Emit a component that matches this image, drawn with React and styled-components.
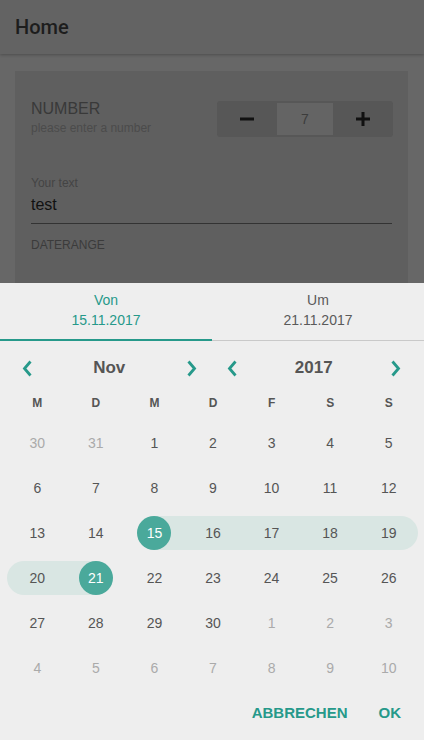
import React, { useState } from 'react';
import styled, { createGlobalStyle } from 'styled-components';

const TEAL = '#26998a';
const TEAL_LIGHT = '#4aa99b';
const BAND = '#d9e6e3';

const GlobalStyle = createGlobalStyle`
  html, body { margin: 0; padding: 0; }
  body {
    background: #676767;
    font-family: "Liberation Sans", Arial, sans-serif;
    height: 740px;
    overflow: hidden;
  }
`;

const Page = styled.div`
  min-height: 740px;
`;

const AppBar = styled.header`
  height: 54px;
  background: #636363;
  box-shadow: 0 1px 3px rgba(0, 0, 0, 0.25);
  display: flex;
  align-items: center;
  padding: 0 15px;
`;

const Title = styled.h1`
  margin: 0;
  font-family: Roboto, "Liberation Sans", sans-serif;
  font-weight: 500;
  font-size: 20px;
  color: #1d1d1d;
`;

const Card = styled.section`
  margin: 17px 16px 0 15px;
  background: #5f5f5f;
  padding: 30px 16px 0;
  min-height: 400px;
`;

const NumberRow = styled.div`
  display: flex;
  justify-content: space-between;
  align-items: flex-start;
`;

const LabelBlock = styled.div`
  display: flex;
  flex-direction: column;
  margin-top: -1px;
`;

const BigLabel = styled.span`
  font-size: 16px;
  line-height: 18px;
  color: #393939;
`;

const Hint = styled.span`
  font-size: 12px;
  line-height: 15px;
  margin-top: 3px;
  color: #4b4b4b;
`;

const Stepper = styled.div`
  display: flex;
  width: 176px;
  height: 36px;
  background: #575757;
  border-radius: 3px;
  margin-right: -1px;
`;

const StepButton = styled.div`
  width: 60px;
  display: flex;
  align-items: center;
  justify-content: center;
`;

const StepValue = styled.div`
  width: 56px;
  margin: 2px 0;
  background: #646464;
  display: flex;
  align-items: center;
  justify-content: center;
  font-size: 14px;
  color: #3c3c3c;
`;

const Field = styled.div`
  margin-top: 39px;
  border-bottom: 1px solid #333;
  padding-bottom: 8px;
`;

const SmallLabel = styled.div`
  font-size: 12px;
  line-height: 14px;
  color: #444;
`;

const FieldValue = styled.div`
  font-size: 16px;
  line-height: 20px;
  margin-top: 5px;
  color: #111;
`;

const Section = styled.div`
  margin-top: 14px;
  font-size: 12px;
  line-height: 14px;
  color: #3b3b3b;
`;

const Sheet = styled.div`
  position: fixed;
  left: 0;
  right: 0;
  bottom: 0;
  height: 457px;
  background: #eeeeee;
  display: flex;
  flex-direction: column;
`;

const Tabs = styled.div`
  display: flex;
  height: 58px;
`;

const Tab = styled.div`
  flex: 1;
  box-sizing: border-box;
  height: 58px;
  padding-top: 7px;
  display: flex;
  flex-direction: column;
  align-items: center;
  font-size: 14px;
  line-height: 20px;
  color: ${p => (p.$active ? TEAL : '#5a5a5a')};
  border-bottom: ${p => (p.$active ? `2px solid ${TEAL}` : '1px solid #c9c9c9')};
`;

const NavRow = styled.div`
  display: flex;
  gap: 12px;
  padding: 0 14px 0 13px;
  margin-top: 7px;
  height: 40px;
`;

const Selector = styled.div`
  flex: 1;
  display: flex;
  align-items: center;
`;

const Arrow = styled.div`
  width: 28px;
  height: 40px;
  display: flex;
  align-items: center;
  justify-content: center;
`;

const SelectorLabel = styled.div`
  flex: 1;
  text-align: center;
  font-size: 17px;
  font-weight: bold;
  color: #555;
`;

const Grid = styled.div`
  display: grid;
  grid-template-columns: repeat(7, 1fr);
  padding: 0 6px 0 8px;
`;

const WeekDay = styled.div`
  height: 30px;
  display: flex;
  align-items: center;
  justify-content: center;
  font-size: 12px;
  font-weight: bold;
  color: #555;
`;

const Days = styled(Grid)`
  margin-top: 2px;
`;

const DayCell = styled.div`
  position: relative;
  height: 45px;
  display: flex;
  align-items: center;
  justify-content: center;

  &::before {
    content: '';
    display: ${p => (p.$band ? 'block' : 'none')};
    position: absolute;
    top: 5.5px;
    height: 34px;
    left: ${p => (p.$band === 'start' ? '50%' : p.$roundLeft ? '-1px' : '0')};
    right: ${p => (p.$band === 'end' ? '50%' : '0')};
    background: ${BAND};
    border-radius: ${p =>
      p.$roundLeft ? '17px 0 0 17px' : p.$roundRight ? '0 17px 17px 0' : '0'};
  }
`;

const DayNum = styled.span`
  position: relative;
  width: 34px;
  height: 34px;
  border-radius: 50%;
  display: flex;
  align-items: center;
  justify-content: center;
  font-size: 14px;
  background: ${p => (p.$selected ? TEAL_LIGHT : 'transparent')};
  color: ${p => (p.$selected ? '#fff' : p.$muted ? '#aaa' : '#555')};
`;

const Actions = styled.div`
  flex: 1;
  display: flex;
  justify-content: flex-end;
  align-items: center;
  gap: 31px;
  padding: 0 23px 6px 0;
`;

const ActionButton = styled.button`
  border: 0;
  background: none;
  padding: 0;
  font-family: "Liberation Sans", Arial, sans-serif;
  font-size: 15px;
  font-weight: bold;
  color: ${TEAL};
`;

const Chevron = ({ dir }) => (
  <svg width="10" height="17" viewBox="0 0 10 17">
    <path
      d={dir === 'left' ? 'M8.5 1.5 L2.5 8.5 L8.5 15.5' : 'M1.5 1.5 L7.5 8.5 L1.5 15.5'}
      fill="none"
      stroke={TEAL}
      strokeWidth="2.8"
    />
  </svg>
);

const Minus = () => (
  <svg width="14" height="14" viewBox="0 0 14 14">
    <rect x="0" y="5.5" width="14" height="3" fill="#111" />
  </svg>
);

const Plus = () => (
  <svg width="14" height="14" viewBox="0 0 14 14">
    <rect x="0" y="5.5" width="14" height="3" fill="#111" />
    <rect x="5.5" y="0" width="3" height="14" fill="#111" />
  </svg>
);

const weekDays = ['M', 'D', 'M', 'D', 'F', 'S', 'S'];

// Nov 2017 starts on a Wednesday; leading days from October
const buildDays = () => {
  const days = [{ n: 30, muted: true }, { n: 31, muted: true }];
  for (let i = 1; i <= 30; i++) days.push({ n: i });
  let next = 1;
  while (days.length < 42) days.push({ n: next++, muted: true });
  return days;
};

const App = () => {
  const [tab, setTab] = useState(0);
  const [start] = useState(15);
  const [end] = useState(21);
  const days = buildDays();

  return (
    <>
      <GlobalStyle />
      <Page>
        <AppBar>
          <Title>Home</Title>
        </AppBar>
        <Card>
          <NumberRow>
            <LabelBlock>
              <BigLabel>NUMBER</BigLabel>
              <Hint>please enter a number</Hint>
            </LabelBlock>
            <Stepper>
              <StepButton><Minus /></StepButton>
              <StepValue>7</StepValue>
              <StepButton><Plus /></StepButton>
            </Stepper>
          </NumberRow>
          <Field>
            <SmallLabel>Your text</SmallLabel>
            <FieldValue>test</FieldValue>
          </Field>
          <Section>DATERANGE</Section>
        </Card>
      </Page>

      <Sheet>
        <Tabs>
          <Tab $active={tab === 0} onClick={() => setTab(0)}>
            <span>Von</span>
            <span>15.11.2017</span>
          </Tab>
          <Tab $active={tab === 1} onClick={() => setTab(1)}>
            <span>Um</span>
            <span>21.11.2017</span>
          </Tab>
        </Tabs>

        <NavRow>
          <Selector>
            <Arrow><Chevron dir="left" /></Arrow>
            <SelectorLabel>Nov</SelectorLabel>
            <Arrow><Chevron dir="right" /></Arrow>
          </Selector>
          <Selector>
            <Arrow><Chevron dir="left" /></Arrow>
            <SelectorLabel>2017</SelectorLabel>
            <Arrow><Chevron dir="right" /></Arrow>
          </Selector>
        </NavRow>

        <Grid>
          {weekDays.map((d, i) => (
            <WeekDay key={i}>{d}</WeekDay>
          ))}
        </Grid>

        <Days>
          {days.map((d, i) => {
            const col = i % 7;
            const inRange = !d.muted && d.n >= start && d.n <= end;
            let band = null;
            if (inRange) {
              if (d.n === start) band = 'start';
              else if (d.n === end) band = 'end';
              else band = 'mid';
            }
            return (
              <DayCell
                key={i}
                $band={band}
                $roundLeft={band === 'mid' && col === 0}
                $roundRight={band === 'mid' && col === 6}
              >
                <DayNum
                  $muted={d.muted}
                  $selected={!d.muted && (d.n === start || d.n === end)}
                >
                  {d.n}
                </DayNum>
              </DayCell>
            );
          })}
        </Days>

        <Actions>
          <ActionButton>ABBRECHEN</ActionButton>
          <ActionButton>OK</ActionButton>
        </Actions>
      </Sheet>
    </>
  );
};

export default App;
